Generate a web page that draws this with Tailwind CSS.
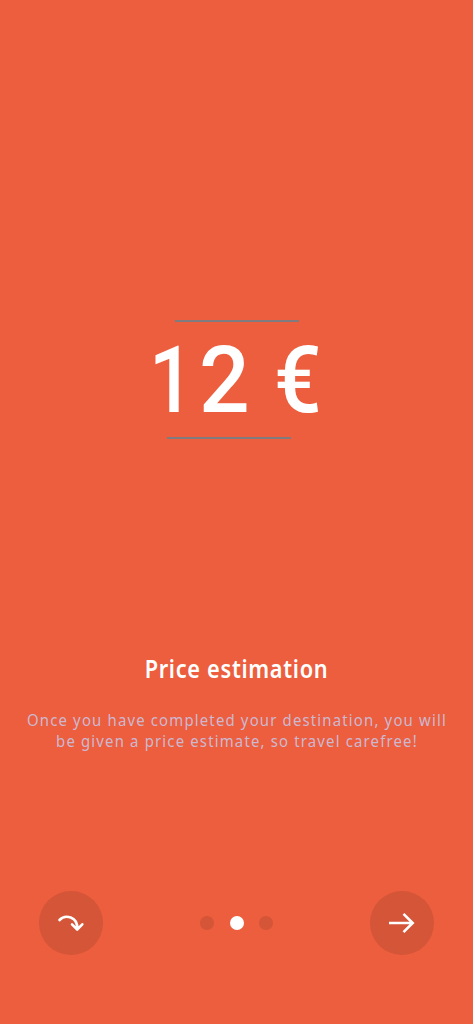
<!DOCTYPE html>
<html lang="en">

<head>
    <meta charset="UTF-8">
    <meta name="viewport" content="width=device-width, initial-scale=1.0">
    <title>Price estimation</title>
    <script src="https://cdn.jsdelivr.net/npm/@tailwindcss/browser@4"></script>
</head>

<body class="bg-[#ec5e3d] h-screen flex flex-col overflow-hidden">

    <!-- Price -->
    <div class="mt-[320px] h-[119px] flex flex-col items-center">
        <div class="w-[124px] h-[2px] bg-[#7f7b7e] ml-px"></div>
        <p class="mt-[3px] mr-[10px] flex font-['Roboto',sans-serif] font-medium text-[93px] leading-[112px] text-white whitespace-pre"><span class="inline-block origin-right scale-x-[0.85]">1</span><span class="inline-block ml-[4px] scale-x-[0.96]">2</span><span class="w-[23.5px]"> </span><span class="inline-block origin-left scale-x-[0.9] -mr-[5px]">€</span></p>
        <div class="w-[124px] h-[2px] bg-[#7f7b7e] mr-[15px]"></div>
    </div>

    <!-- Description -->
    <div class="mt-[213px] h-[101px] text-center font-['Noto_Sans',sans-serif]">
        <h1 class="text-[25px] leading-8 tracking-[0.8px] font-semibold text-white scale-x-[0.87]">Price estimation</h1>
        <p class="-mx-8 mt-[25px] pl-px text-[17px] leading-[21px] tracking-[1.3px] text-[#ccb8d0] whitespace-nowrap scale-x-[0.88]">Once you have completed your destination, you will<br>be given a price estimate, so travel carefree!</p>
    </div>

    <!-- Navigation -->
    <div class="mt-[138px] pl-[39px] pr-[39px] flex items-center justify-between">
        <button aria-label="Skip" class="size-16 rounded-full bg-[#d45537] flex items-center justify-center">
            <svg class="size-16" viewBox="0 0 64 64" fill="none" stroke="white" stroke-width="2.6" stroke-linecap="round" stroke-linejoin="round">
                <path d="M20.5 29C26 23 39 25.5 38.2 38M33 33.3L38.2 38.5L43.3 33.3" />
            </svg>
        </button>
        <div class="flex gap-[15.5px]">
            <span class="size-3.5 rounded-full bg-[#d45537]"></span>
            <span class="size-3.5 rounded-full bg-white"></span>
            <span class="size-3.5 rounded-full bg-[#d45537]"></span>
        </div>
        <button aria-label="Next" class="size-16 rounded-full bg-[#d45537] flex items-center justify-center">
            <svg class="size-16" viewBox="0 0 64 64" fill="none" stroke="white" stroke-width="2.6">
                <path d="M19 32H43M33.5 22.8L42.7 32L33.5 41.2" />
            </svg>
        </button>
    </div>

</body>

</html>
